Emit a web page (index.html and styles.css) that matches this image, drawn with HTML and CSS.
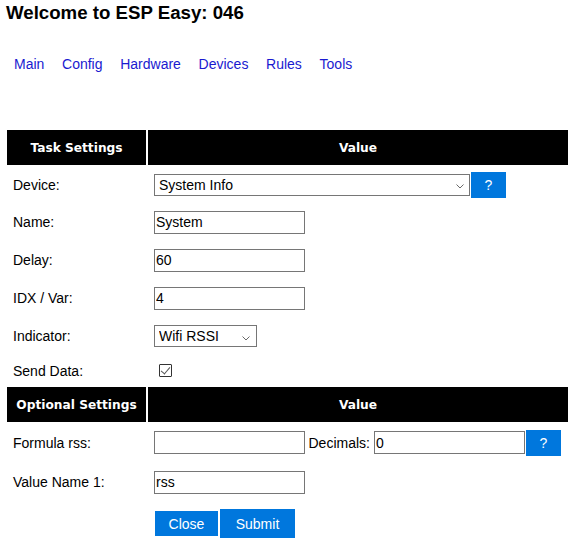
FILE: index.html
```
<!DOCTYPE html>
<html>
<head>
<meta charset="utf-8">
<title>ESP Easy</title>
<link rel="stylesheet" href="styles.css">
</head>
<body>
<h1 class="title">Welcome to ESP Easy: 046</h1>
<nav class="menu">
  <a class="menu-link" href="#">Main</a>
  <a class="menu-link" href="#">Config</a>
  <a class="menu-link" href="#">Hardware</a>
  <a class="menu-link" href="#">Devices</a>
  <a class="menu-link" href="#">Rules</a>
  <a class="menu-link" href="#">Tools</a>
</nav>
<form class="task-form">
<table class="settings">
  <tr class="head-row">
    <th class="col-label">Task Settings</th>
    <th class="col-value">Value</th>
  </tr>
  <tr class="row-35">
    <td class="label">Device:</td>
    <td class="value"><div class="line">
      <div class="sel-wrap">
        <select class="sel sel-device"><option>System Info</option></select>
        <svg class="chev chev-device" width="8" height="5" viewBox="0 0 8 5"><path d="M0.5 0.5 L4 4 L7.5 0.5" fill="none" stroke="#6a6a6a" stroke-width="1"/></svg>
      </div>
      <a class="help" href="#">?</a>
    </div></td>
  </tr>
  <tr class="row-36">
    <td class="label">Name:</td>
    <td class="value"><div class="line"><input class="txt" type="text" value="System"></div></td>
  </tr>
  <tr class="row-36">
    <td class="label">Delay:</td>
    <td class="value"><div class="line"><input class="txt" type="text" value="60"></div></td>
  </tr>
  <tr class="row-36">
    <td class="label">IDX / Var:</td>
    <td class="value"><div class="line"><input class="txt" type="text" value="4"></div></td>
  </tr>
  <tr class="row-36">
    <td class="label">Indicator:</td>
    <td class="value"><div class="line">
      <div class="sel-wrap">
        <select class="sel sel-ind"><option>Wifi RSSI</option></select>
        <svg class="chev chev-ind" width="8" height="5" viewBox="0 0 8 5"><path d="M0.5 0.5 L4 4 L7.5 0.5" fill="none" stroke="#6a6a6a" stroke-width="1"/></svg>
      </div>
    </div></td>
  </tr>
  <tr class="row-29">
    <td class="label">Send Data:</td>
    <td class="value"><div class="line"><input class="chk" type="checkbox" checked></div></td>
  </tr>
  <tr class="head-row">
    <th class="col-label">Optional Settings</th>
    <th class="col-value">Value</th>
  </tr>
  <tr class="row-37">
    <td class="label">Formula rss:</td>
    <td class="value"><div class="line">
      <input class="txt" type="text" value="">
      <span class="inline-label">Decimals:</span>
      <input class="txt" type="text" value="0">
      <a class="help" href="#">?</a>
    </div></td>
  </tr>
  <tr class="row-38">
    <td class="label">Value Name 1:</td>
    <td class="value"><div class="line"><input class="txt" type="text" value="rss"></div></td>
  </tr>
  <tr class="row-41">
    <td class="label"></td>
    <td class="value"><div class="line">
      <a class="btn btn-close" href="#">Close</a>
      <input class="btn btn-submit" type="submit" value="Submit">
    </div></td>
  </tr>
</table>
</form>
</body>
</html>
```
FILE: styles.css
```
html, body {
  margin: 0;
  padding: 0;
  background: #fff;
}
body {
  padding-left: 5px;
  font-family: "Liberation Sans", Arial, sans-serif;
  font-size: 14px;
  color: #000;
}
.title {
  margin: 2px 0 0 1px;
  font-size: 18.67px;
  line-height: 22px;
  font-weight: bold;
  color: #000;
}
.menu {
  display: flex;
  gap: 17.7px;
  margin-top: 32px;
  padding-left: 9px;
  height: 16px;
  line-height: 16px;
}
.menu-link {
  color: #1a1ad0;
  text-decoration: none;
}
.task-form {
  margin: 0;
}
.settings {
  margin-top: 56px;
  border-collapse: separate;
  border-spacing: 2px;
}
.settings th {
  padding: 0;
  background: #000;
  color: #fff;
  font-family: "DejaVu Sans", Verdana, sans-serif;
  font-weight: bold;
  font-size: 12.2px;
  text-align: center;
  vertical-align: middle;
}
.head-row th { height: 35px; }
.col-label { width: 139px; }
.col-value { width: 420px; }
.settings td {
  padding: 0 6px;
  vertical-align: middle;
}
.row-35 td { height: 35px; }
.row-36 td { height: 36px; }
.row-29 td { height: 29px; }
.row-37 td { height: 37px; }
.row-38 td { height: 38px; }
.row-41 td { height: 41px; }
.line {
  display: flex;
  align-items: center;
}
.txt {
  box-sizing: border-box;
  width: 151px;
  height: 23px;
  margin: 0;
  padding: 0 1px;
  border: 1px solid #767676;
  border-radius: 0;
  font-family: "Liberation Sans", Arial, sans-serif;
  font-size: 14px;
  color: #000;
  background: #fff;
  outline: none;
}
.sel-wrap {
  position: relative;
  display: flex;
}
.sel {
  -webkit-appearance: none;
  appearance: none;
  box-sizing: border-box;
  height: 22px;
  margin: 0;
  padding: 0 0 0 4px;
  border: 1px solid #767676;
  border-radius: 0;
  font-family: "Liberation Sans", Arial, sans-serif;
  font-size: 14px;
  color: #000;
  background-color: #fff;
}
.sel-device { width: 316px; }
.sel-ind { width: 103px; }
.chev {
  position: absolute;
  top: 10px;
  pointer-events: none;
}
.chev-device { right: 6px; }
.chev-ind { right: 7px; top: 11px; }
.help {
  display: flex;
  align-items: center;
  justify-content: center;
  width: 35px;
  height: 26px;
  margin-left: 1px;
  background: #0077dd;
  color: #fff;
  text-decoration: none;
  font-size: 14px;
}
.inline-label {
  margin: 0 4px 0 3.5px;
}
.chk {
  -webkit-appearance: none;
  appearance: none;
  position: relative;
  box-sizing: border-box;
  width: 13px;
  height: 13px;
  margin: 0 0 0 5px;
  border: 1px solid #333;
  border-radius: 1px;
  background: #fff;
}
.chk:checked::after {
  content: "";
  position: absolute;
  left: 3px;
  top: 0px;
  width: 4px;
  height: 8px;
  border-right: 1px solid #555;
  border-bottom: 1px solid #555;
  transform: rotate(40deg);
}
.btn {
  box-sizing: border-box;
  display: flex;
  align-items: center;
  justify-content: center;
  margin: 0;
  padding: 0;
  border: none;
  background: #0077dd;
  color: #fff;
  font-family: "Liberation Sans", Arial, sans-serif;
  font-size: 14px;
  text-decoration: none;
}
.btn-close {
  width: 63px;
  height: 25px;
  margin-left: 1px;
}
.btn-submit {
  width: 75px;
  height: 29px;
  margin-left: 2px;
}
```
